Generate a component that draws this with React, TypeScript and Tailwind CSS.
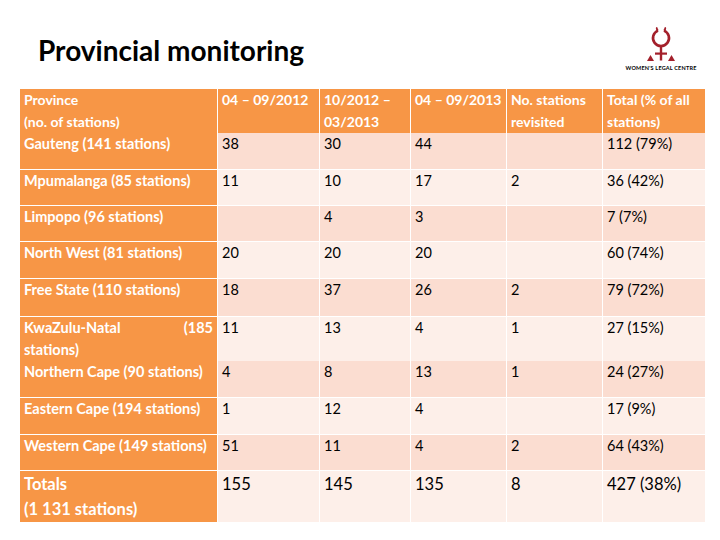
import React from "react";

const DARK = "bg-[#fbddd1]";
const LIGHT = "bg-[#fdefe9]";

type Row = {
  name: React.ReactNode;
  vals: string[];
  h: string;
  shade: string;
};

const rows: Row[] = [
  { name: "Gauteng (141 stations)", vals: ["38", "30", "44", "", "112 (79%)"], h: "h-[36px]", shade: DARK },
  { name: "Mpumalanga (85 stations)", vals: ["11", "10", "17", "2", "36 (42%)"], h: "h-[35px]", shade: LIGHT },
  { name: "Limpopo (96 stations)", vals: ["", "4", "3", "", "7 (7%)"], h: "h-[35px]", shade: DARK },
  { name: "North West (81 stations)", vals: ["20", "20", "20", "", "60 (74%)"], h: "h-[36px]", shade: LIGHT },
  { name: "Free State (110 stations)", vals: ["18", "37", "26", "2", "79 (72%)"], h: "h-[37px]", shade: DARK },
  {
    name: (
      <>
        <span className="flex justify-between">
          <span>KwaZulu-Natal</span>
          <span>(185</span>
        </span>
        <span className="block">stations)</span>
      </>
    ),
    vals: ["11", "13", "4", "1", "27 (15%)"],
    h: "h-[43px]",
    shade: LIGHT,
  },
  { name: "Northern Cape (90 stations)", vals: ["4", "8", "13", "1", "24 (27%)"], h: "h-[36px]", shade: DARK },
  { name: "Eastern Cape (194 stations)", vals: ["1", "12", "4", "", "17 (9%)"], h: "h-[36px]", shade: LIGHT },
  { name: "Western Cape (149 stations)", vals: ["51", "11", "4", "2", "64 (43%)"], h: "h-[35px]", shade: DARK },
];

const cols = "grid grid-cols-[197px_101px_90px_95px_95px_102px] gap-x-px";

function Logo() {
  return (
    <div className="w-[68px] h-[46px] flex flex-col items-center">
      <svg width="40" height="38" viewBox="0 0 40 38">
        <path
          d="M17 3.6 A8 8 0 1 0 23 3.6"
          fill="none"
          stroke="#a3202b"
          strokeWidth="2.6"
        />
        <path d="M17 3.6 Q15.2 2 16 0.4" fill="none" stroke="#a3202b" strokeWidth="1.8" />
        <path d="M23 3.6 Q24.8 2 24 0.4" fill="none" stroke="#a3202b" strokeWidth="1.8" />
        <rect x="18.8" y="19.5" width="2.4" height="14" fill="#a3202b" />
        <rect x="14" y="25.5" width="12" height="2.2" fill="#a3202b" />
        <polygon points="6,34 9.5,28 13,34" fill="#a3202b" />
        <polygon points="27,34 30.5,28 34,34" fill="#a3202b" />
      </svg>
      <div className="text-[5.5px] font-bold leading-none tracking-[0.2px] text-black whitespace-nowrap mt-[1px]">
        WOMEN'S LEGAL CENTRE
      </div>
    </div>
  );
}

export default function App() {
  return (
    <div
      className="w-[720px] h-[540px] bg-white relative overflow-hidden"
      style={{ fontFamily: "Lato, 'Liberation Sans', sans-serif" }}
    >
      <div className="flex items-start justify-between pl-[38px] pr-[25px] pt-[31px] h-[89px]">
        <h1 className="text-[28px] font-bold leading-[38px] text-black">Provincial monitoring</h1>
        <div className="-mt-[4px]">
          <Logo />
        </div>
      </div>
      <div className="ml-[20px] w-[685px] flex flex-col gap-y-px text-[14.5px]">
        <div className={`${cols} h-[43px] leading-[22px] font-bold text-white text-[14px]`}>
          <div className="bg-[#f79646] pl-[4px]">
            Province
            <br />
            (no. of stations)
          </div>
          <div className="bg-[#f79646] pl-[4px]">04 – 09/2012</div>
          <div className="bg-[#f79646] pl-[4px]">
            10/2012 –<br />
            03/2013
          </div>
          <div className="bg-[#f79646] pl-[4px]">04 – 09/2013</div>
          <div className="bg-[#f79646] pl-[4px]">
            No. stations
            <br />
            revisited
          </div>
          <div className="bg-[#f79646] pl-[4px]">
            Total (% of all
            <br />
            stations)
          </div>
        </div>
        {rows.map((r, i) => (
          <div key={i} className={`${cols} ${r.h} leading-[22px]`}>
            <div className="bg-[#f79646] pl-[4px] pr-[4px] font-bold text-white">{r.name}</div>
            {r.vals.map((v, j) => (
              <div key={j} className={`${r.shade} pl-[4px] text-black`}>
                {v}
              </div>
            ))}
          </div>
        ))}
        <div className={`${cols} h-[51px] leading-[25px] text-[16.5px] pt-[1px]`}>
          <div className="bg-[#f79646] pl-[4px] font-bold text-white -mt-[1px] pt-[1px]">
            Totals
            <br />
            (1 131 stations)
          </div>
          {["155", "145", "135", "8", "427 (38%)"].map((v, j) => (
            <div key={j} className={`${LIGHT} pl-[4px] text-black -mt-[1px] pt-[1px]`}>
              {v}
            </div>
          ))}
        </div>
      </div>
    </div>
  );
}
